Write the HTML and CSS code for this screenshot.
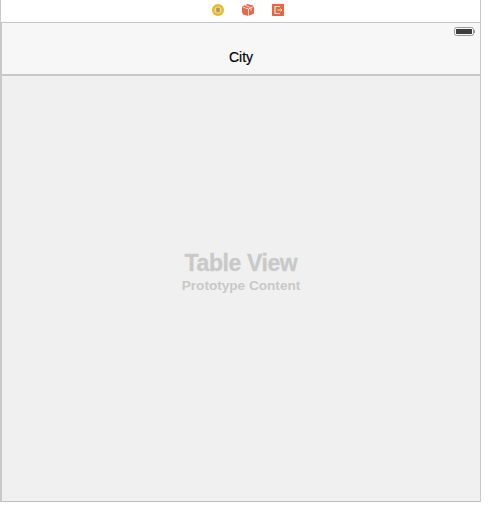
FILE: index.html
```html
<!DOCTYPE html>
<html lang="en">
<head>
<meta charset="utf-8">
<title>City</title>
<link rel="stylesheet" href="styles.css">
</head>
<body>
<div class="frame">
  <div class="dock">
    <svg class="dock-icon" viewBox="0 0 14 14" width="14" height="14"><circle cx="7" cy="7" r="6" fill="#e8b92c"/><circle cx="7" cy="7" r="3.6" fill="#ead9a0"/><rect x="5.2" y="4.8" width="3.6" height="4.4" rx="0.6" fill="#b59a4a"/></svg>
    <svg class="dock-icon" viewBox="0 0 14 14" width="14" height="14"><path d="M6.5 1 12 2.5 13 5V10.5L7.5 13 2 11.5 1 9V3.5Z" fill="#e8674a"/><path d="M1.5 4 7.5 6V13M7.5 6 12.5 3.5" fill="none" stroke="#f9d9cc" stroke-width="1"/><path d="M4 2.3 10 4.6V8" fill="none" stroke="#f9d9cc" stroke-width="1"/></svg>
    <svg class="dock-icon" viewBox="0 0 14 14" width="14" height="14"><rect x="1" y="1" width="12" height="12" fill="#e8673f"/><path d="M9 3.5H4V10.5H9" fill="none" stroke="#fbe3d8" stroke-width="1.2"/><path d="M6.5 7H11M9.6 5.6 11 7 9.6 8.4" fill="none" stroke="#fbe3d8" stroke-width="1"/></svg>
  </div>
  <div class="nav">
    <div class="status">
      <div class="battery"><div class="battery-fill"></div></div>
      <div class="battery-tip"></div>
    </div>
    <div class="nav-title">City</div>
  </div>
  <div class="table">
    <div class="table-title">Table View</div>
    <div class="table-sub">Prototype Content</div>
  </div>
</div>
</body>
</html>
```

FILE: styles.css
```css
html, body {
  margin: 0;
  padding: 0;
  background: #fff;
}
body {
  width: 500px;
  height: 514px;
  overflow: hidden;
  font-family: "Liberation Sans", Arial, sans-serif;
}
.frame {
  width: 481px;
  height: 502px;
  box-sizing: border-box;
  border-left: 2px solid #c9c9c9;
  border-right: 1px solid #c9c9c9;
  border-bottom: 1px solid #bdbdbd;
  display: flex;
  flex-direction: column;
}
.dock {
  height: 23px;
  flex: none;
  box-sizing: border-box;
  border-bottom: 1px solid #c4c4c4;
  background: #fff;
  display: flex;
  justify-content: center;
  gap: 16px;
  padding: 3px 0 0 14px;
  margin-left: -1px;
}
.dock-icon {
  display: block;
  filter: blur(0.4px);
}
.nav {
  height: 53px;
  flex: none;
  box-sizing: border-box;
  background: #f7f7f7;
  border-bottom: 2px solid #c8c8c8;
  display: flex;
  flex-direction: column;
}
.status {
  display: flex;
  justify-content: flex-end;
  align-items: center;
  padding: 4px 5px 0 0;
}
.battery {
  width: 20px;
  height: 9px;
  box-sizing: border-box;
  border: 1px solid #9a9a9a;
  border-radius: 2.5px;
  padding: 1px;
  filter: blur(0.3px);
}
.battery-fill {
  height: 100%;
  background: #3e3e3e;
}
.battery-tip {
  width: 1px;
  height: 3px;
  background: #9a9a9a;
}
.nav-title {
  margin-top: 12px;
  text-align: center;
  font-size: 14px;
  line-height: 18px;
  font-weight: 400;
  color: #000;
  -webkit-text-stroke: 0.2px #000;
}
.table {
  flex: 1;
  background: #f0f0f0;
  display: flex;
  flex-direction: column;
  align-items: center;
  padding-top: 174px;
  color: #c9c9c9;
  font-weight: 700;
}
.table-title {
  font-size: 23px;
  line-height: 27px;
  letter-spacing: -0.4px;
  -webkit-text-stroke: 0.3px #c9c9c9;
}
.table-sub {
  font-size: 13.6px;
  line-height: 18px;
  letter-spacing: 0;
}
```
